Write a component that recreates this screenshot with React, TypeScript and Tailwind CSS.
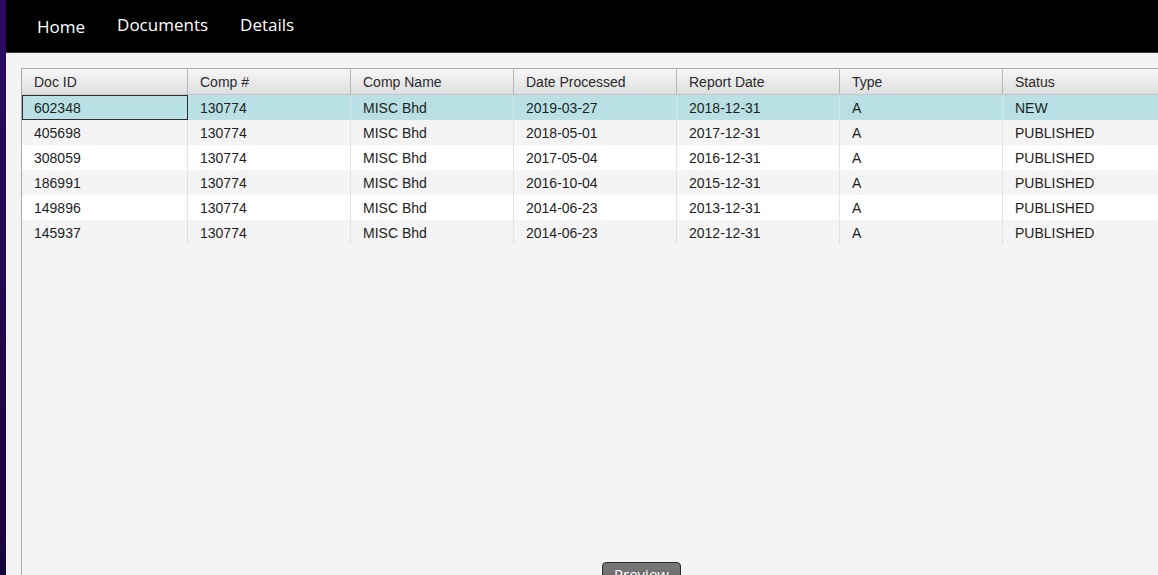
import React, { useState } from 'react';

type Doc = {
  id: string;
  comp: string;
  name: string;
  processed: string;
  report: string;
  type: string;
  status: string;
};

const COLUMNS = ['Doc ID', 'Comp #', 'Comp Name', 'Date Processed', 'Report Date', 'Type', 'Status'];

const DOCS: Doc[] = [
  { id: '602348', comp: '130774', name: 'MISC Bhd', processed: '2019-03-27', report: '2018-12-31', type: 'A', status: 'NEW' },
  { id: '405698', comp: '130774', name: 'MISC Bhd', processed: '2018-05-01', report: '2017-12-31', type: 'A', status: 'PUBLISHED' },
  { id: '308059', comp: '130774', name: 'MISC Bhd', processed: '2017-05-04', report: '2016-12-31', type: 'A', status: 'PUBLISHED' },
  { id: '186991', comp: '130774', name: 'MISC Bhd', processed: '2016-10-04', report: '2015-12-31', type: 'A', status: 'PUBLISHED' },
  { id: '149896', comp: '130774', name: 'MISC Bhd', processed: '2014-06-23', report: '2013-12-31', type: 'A', status: 'PUBLISHED' },
  { id: '145937', comp: '130774', name: 'MISC Bhd', processed: '2014-06-23', report: '2012-12-31', type: 'A', status: 'PUBLISHED' },
];

// first column is a touch wider than the rest
const colWidth = (i: number) => (i === 0 ? 'w-[166px]' : 'w-[163px]');

const NavBar: React.FC = () => (
  <nav className="h-[53px] shrink-0 bg-black border-b border-[#3a3a3a] flex items-start pl-[31px] text-white text-[17px] font-['Open_Sans',sans-serif]">
    <a className="mt-[14px]">Home</a>
    <a className="mt-[12px] ml-[32px]">Documents</a>
    <a className="mt-[12px] ml-[32px]">Details</a>
  </nav>
);

const App: React.FC = () => {
  const [selected, setSelected] = useState(0);

  return (
    <div className="w-full h-[575px] overflow-hidden flex bg-[#1a0838]">
      <div className="w-[6px] shrink-0 bg-gradient-to-b from-[#2c0b66] to-[#17063a]" />
      <div className="flex-1 min-w-0 flex flex-col">
        <NavBar />
        <main className="relative flex-1 bg-[#f4f4f4] pl-[15px] pt-[15px] overflow-hidden">
          <div className="h-full w-[1160px] border-l border-t border-[#a9a9a9] bg-[#f4f4f4] font-['Liberation_Sans',Arial,sans-serif] text-[14px] text-[#1e1e1e]">
            <div className="flex h-[26px] bg-gradient-to-b from-[#f7f7f7] to-[#dedede] border-b border-[#c6c6c6]">
              {COLUMNS.map((c, i) => (
                <div
                  key={c}
                  className={`${colWidth(i)} shrink-0 pl-[12px] pt-[1px] flex items-center border-r border-[#b6b6b6] text-[#2a2a2a]`}
                >
                  {c}
                </div>
              ))}
            </div>
            {DOCS.map((d, r) => {
              const cells = [d.id, d.comp, d.name, d.processed, d.report, d.type, d.status];
              const isSel = r === selected;
              const bg = isSel ? 'bg-[#b9e0e4]' : r % 2 === 0 ? 'bg-white' : 'bg-[#f4f4f4]';
              return (
                <div key={d.id} className={`flex h-[25px] ${bg}`} onClick={() => setSelected(r)}>
                  {cells.map((v, i) => (
                    <div
                      key={i}
                      className={`${colWidth(i)} shrink-0 pl-[12px] pt-[1px] flex items-center border-r ${
                        isSel ? 'border-[#cfe8ea]' : 'border-[#e2e2e2]'
                      } ${isSel && i === 0 ? 'outline outline-1 -outline-offset-1 outline-[#2e2e2e]' : ''}`}
                    >
                      {v}
                    </div>
                  ))}
                </div>
              );
            })}
          </div>
          <button className="absolute left-[596px] top-[509px] w-[79px] h-[30px] rounded-[4px] border border-[#2a2a2a] bg-gradient-to-b from-[#7a7a7a] to-[#5e5e5e] text-white text-[15px] font-['Open_Sans',sans-serif] leading-none pt-[4px] flex justify-center">
            Preview
          </button>
        </main>
      </div>
    </div>
  );
};

export default App;
